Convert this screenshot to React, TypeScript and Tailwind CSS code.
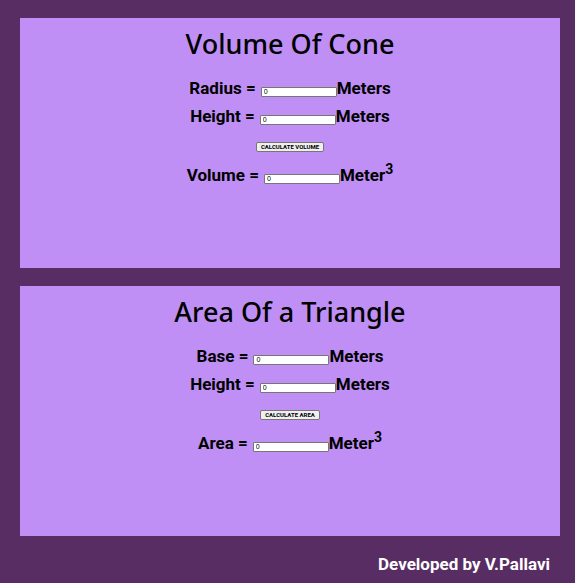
type Field = { id: string; label: string };
type CardProps = { title: string; inputs: Field[]; action: string; result: Field };

const boxClass =
  "block h-[10px] w-[76px] rounded-[1px] border border-[#767676] bg-white px-[2px] font-['Liberation_Sans',sans-serif] text-[7px] font-medium leading-[8px] text-black";

function Row({ field, readOnly }: { field: Field; readOnly?: boolean }) {
  return (
    <div className="flex h-7 items-baseline justify-center">
      <label htmlFor={field.id} className="mr-[5px]">{field.label} =</label>
      <input id={field.id} type="text" defaultValue="0" readOnly={readOnly} className={boxClass} />
      <span>{readOnly ? <>Meter<sup className="text-sm leading-none">3</sup></> : "Meters"}</span>
    </div>
  );
}

function Card({ title, inputs, action, result }: CardProps) {
  return (
    <section className="h-[250px] bg-[#bf8ff5] pt-2 text-center">
      <h2 className="font-['Trebuchet_MS','Noto_Sans',sans-serif] text-[27px] font-medium leading-9">{title}</h2>
      <form className="mt-3 font-['Franklin_Gothic_Medium',Roboto,sans-serif] text-[17px] font-bold leading-7">
        {inputs.map((f) => <Row key={f.id} field={f} />)}
        <div className="flex justify-center pb-[9px] pt-3">
          <button type="button" className="h-[10px] rounded-[2px] border border-[#767676] bg-[#efefef] px-[4px] text-[6px] leading-[8px]">{action}</button>
        </div>
        <Row field={result} readOnly />
      </form>
    </section>
  );
}

export default function App() {
  return (
    <main className="min-h-screen bg-[#572d63] pl-5 pr-[15px] pt-[18px] text-black">
      <div className="flex flex-col gap-[18px]">
        <Card title="Volume Of Cone" inputs={[{ id: "radius", label: "Radius" }, { id: "cone-height", label: "Height" }]} action="CALCULATE VOLUME" result={{ id: "volume", label: "Volume" }} />
        <Card title="Area Of a Triangle" inputs={[{ id: "base", label: "Base" }, { id: "triangle-height", label: "Height" }]} action="CALCULATE AREA" result={{ id: "area", label: "Area" }} />
      </div>
      <footer className="pr-[10px] pt-4 text-right font-['Franklin_Gothic_Medium',Roboto,sans-serif] text-[17px] font-bold leading-6 text-white">Developed by V.Pallavi</footer>
    </main>
  );
}
